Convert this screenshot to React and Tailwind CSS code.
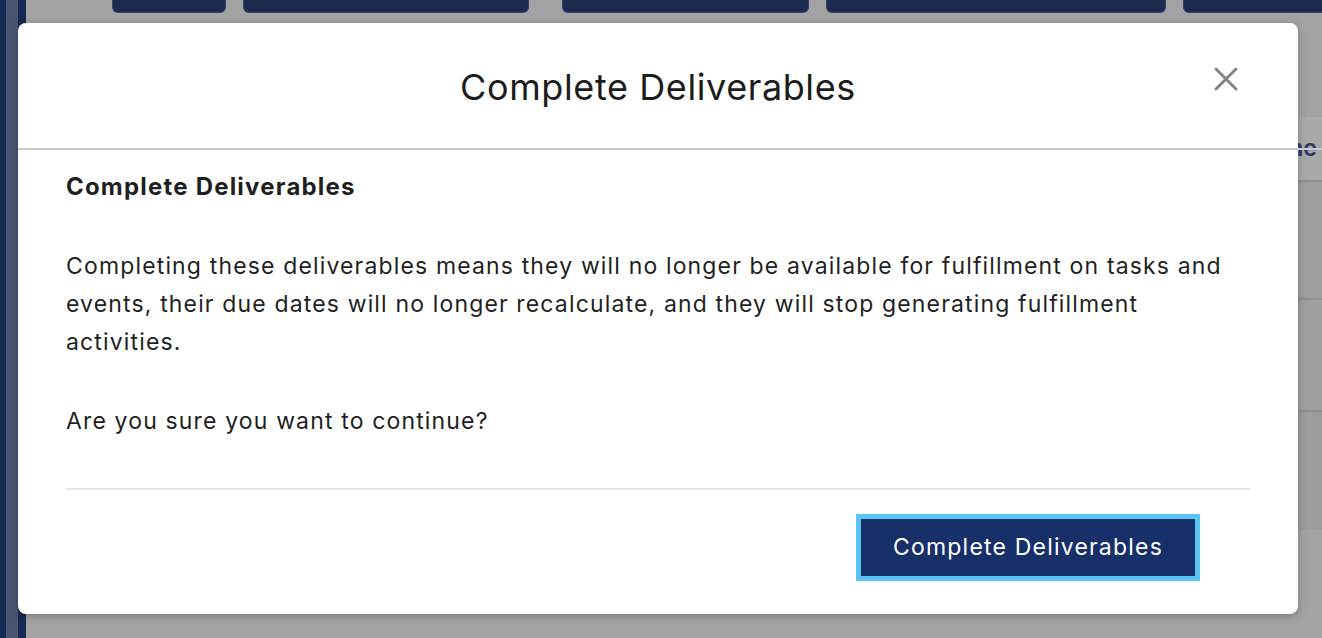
import React from 'react';

const font = { fontFamily: 'Inter, "Noto Sans", sans-serif' };

const TopTab = ({ className }) => (
    <div className={`h-[13px] shrink-0 rounded-b-[6px] border border-t-0 border-[#33446b] bg-[#1b2a4e] ${className}`} />
);

const Backdrop = () => (
    <div className="flex h-full w-full">
        {/* sidebar strips */}
        <div className="flex h-full shrink-0">
            <div className="w-[6px] bg-[#172a52]" />
            <div className="w-[12px] bg-[#4b5571]" />
            <div className="w-[8px] bg-[#172a52]" />
        </div>

        <div className="flex min-w-0 flex-1 flex-col overflow-hidden">
            {/* toolbar buttons cut off at the top */}
            <div className="flex gap-[17px] overflow-hidden pl-[86px]">
                <TopTab className="w-[114px]" />
                <TopTab className="mr-[16px] w-[286px]" />
                <TopTab className="w-[247px]" />
                <TopTab className="w-[340px]" />
                <TopTab className="w-[200px]" />
            </div>

            {/* table behind the modal */}
            <div className="mt-[104px] flex flex-col">
                <div className="flex h-[65px] items-center justify-end border-b-2 border-[#8f8f8f] bg-[#a9a9a9] pr-[5px]">
                    <span className="text-[23px] font-bold text-[#2d3b63]" style={font}>Name</span>
                </div>
                <div className="h-[118px] border-b-2 border-[#8f8f8f] bg-[#9f9f9f]" />
                <div className="h-[112px] border-b-2 border-[#8f8f8f] bg-[#9f9f9f]" />
                <div className="h-[118px] bg-[#9c9c9c]" />
            </div>
        </div>
    </div>
);

const CloseIcon = () => (
    <svg width="26" height="26" viewBox="0 0 26 26" fill="none" stroke="#858585" strokeWidth="3" strokeLinecap="round">
        <path d="M3 3 L23 23 M23 3 L3 23" />
    </svg>
);

export default function App() {
    return (
        <div className="relative h-[638px] w-[1322px] overflow-hidden bg-[#a3a3a3]" style={font}>
            <Backdrop />

            {/* Modal dialog */}
            <div className="absolute left-[18px] top-[23px] flex h-[591px] w-[1280px] flex-col rounded-[8px] bg-white shadow-[0_2px_8px_rgba(0,0,0,0.25)]">
                {/* Header */}
                <div className="relative flex h-[127px] shrink-0 items-center justify-center">
                    <h2 className="text-[36px] font-normal tracking-[0.6px] text-[#1c1c1c]" style={font}>Complete Deliverables</h2>
                    <button className="absolute right-[59px] top-[43px] flex items-center justify-center">
                        <CloseIcon />
                    </button>
                    <div className="absolute bottom-0 left-0 right-[-24px] h-[2px] bg-[#c9c9c9]" />
                </div>

                {/* Body */}
                <div className="flex flex-col px-[48px] pt-[18px] text-[23px] leading-[38px] tracking-[1.15px] text-[#1f1f1f]">
                    <h3 className="text-[24px] font-bold tracking-[1.2px]">Complete Deliverables</h3>
                    <p className="mt-[41px]">
                        Completing these deliverables means they will no longer be available for fulfillment on tasks and
                        events, their due dates will no longer recalculate, and they will stop generating fulfillment
                        activities.
                    </p>
                    <p className="mt-[41px]">Are you sure you want to continue?</p>
                    <div className="mt-[48px] h-[2px] bg-[#e6e6e6]" />
                </div>

                {/* Footer */}
                <div className="flex justify-end pr-[98px] pt-[24px]">
                    <button className="h-[67px] border-[5px] border-[#5bc4f6] bg-[#17306a] px-[32px] text-[23px] tracking-[1.2px] text-white">
                        Complete Deliverables
                    </button>
                </div>
            </div>
        </div>
    );
}
